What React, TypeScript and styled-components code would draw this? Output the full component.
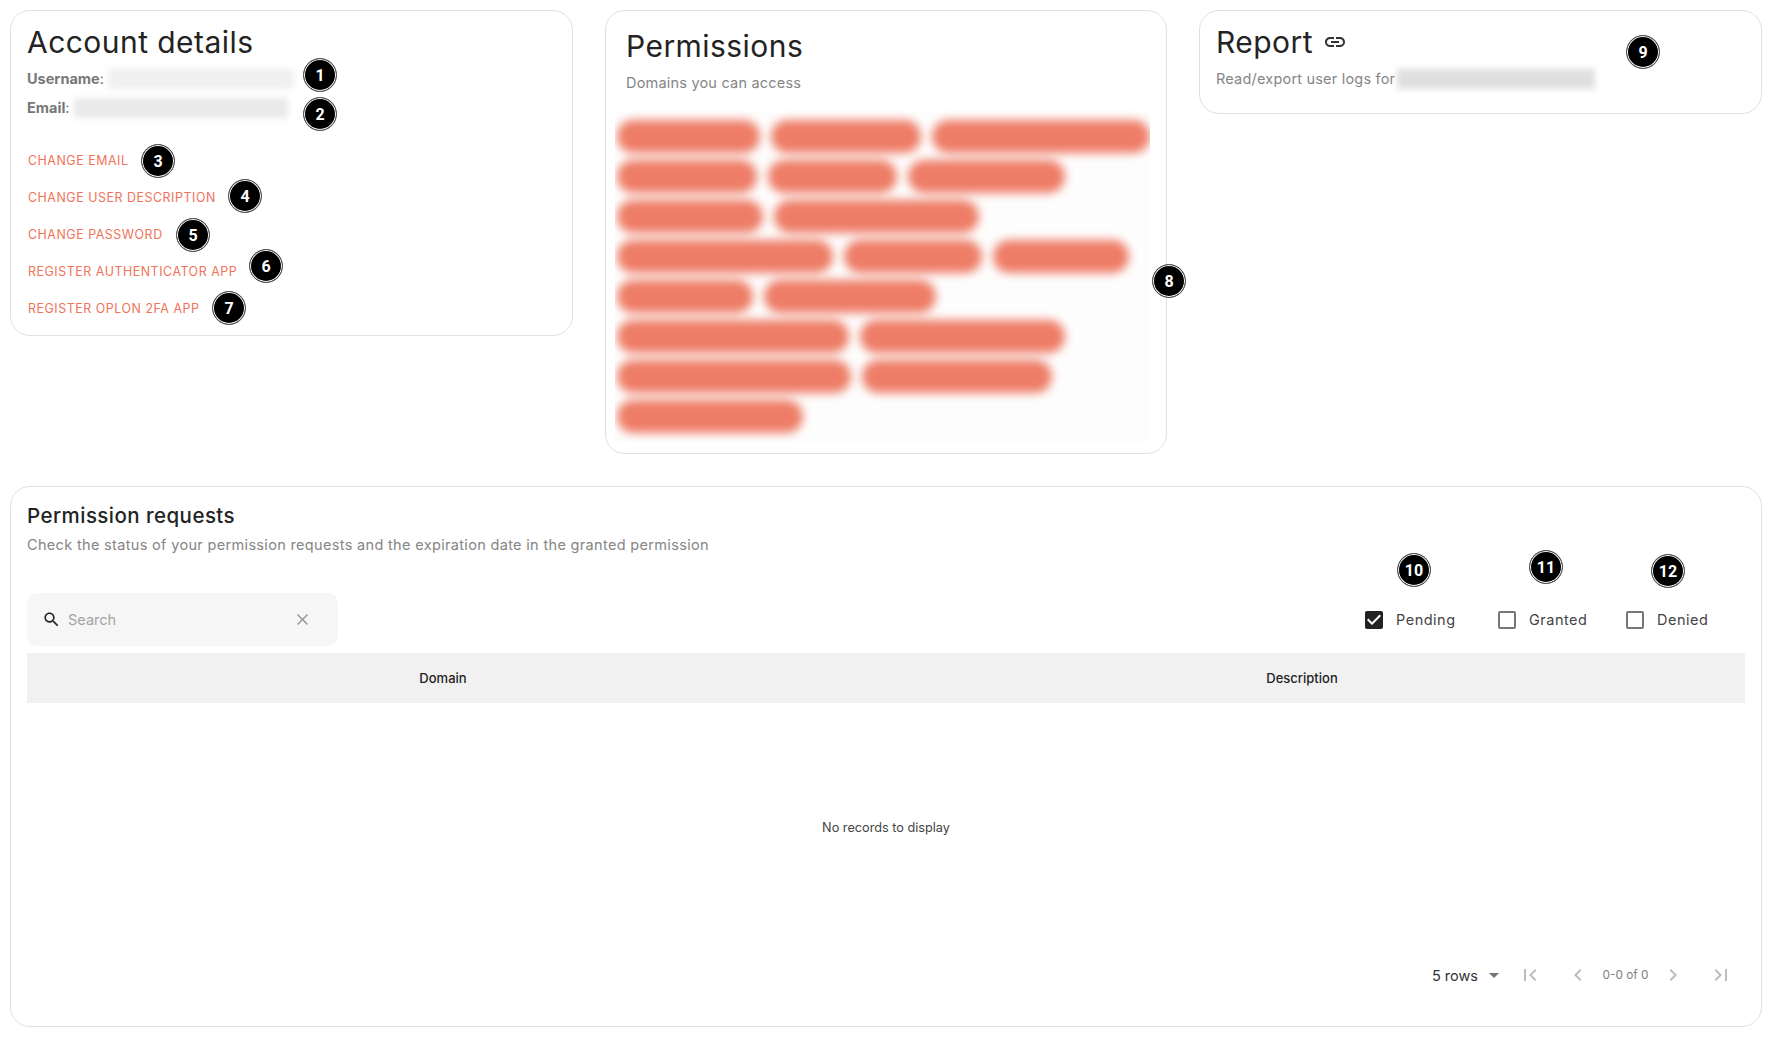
import React from "react";
import styled, { createGlobalStyle } from "styled-components";

const Global = createGlobalStyle`
  html, body { margin: 0; padding: 0; background: #fff; }
  body { font-family: Inter, "Noto Sans", "Liberation Sans", sans-serif; color: #232323; }
`;

const Page = styled.div`
  position: relative;
  box-sizing: border-box;
  width: 1778px;
  height: 1043px;
  padding: 10px 16px 16px 10px;
  overflow: hidden;
`;
const TopGrid = styled.div`
  display: grid;
  grid-template-columns: 563px 562px 563px;
  column-gap: 32px;
  align-items: start;
`;
const Card = styled.section<{ $h: number; $pad?: string }>`
  box-sizing: border-box;
  height: ${(p) => p.$h}px;
  padding: ${(p) => p.$pad || "0 16px"};
  background: #fff;
  border: 1px solid #e0e0e0;
  border-radius: 20px;
`;
const Title = styled.h1<{ $top?: number }>`
  margin: 0;
  padding-top: ${(p) => p.$top ?? 11}px;
  padding-bottom: 1px;
  font-size: 30px;
  line-height: 40px;
  font-weight: 400;
  letter-spacing: 0.45px;
  display: flex;
  align-items: center;
  gap: 10px;
`;
const InfoRow = styled.div`
  display: flex;
  align-items: center;
  height: 29px;
  font-size: 14.5px;
  color: #777;
  position: relative;
  top: 1px;
`;
const InfoLabel = styled.span`
  font-weight: 700;
`;
const Redacted = styled.span<{ $w: number; $tone?: string }>`
  display: inline-block;
  width: ${(p) => p.$w}px;
  height: 20px;
  background: ${(p) => p.$tone || "#e9e9e9"};
  filter: blur(3px);
`;
const Links = styled.div`
  display: flex;
  flex-direction: column;
  margin-top: 21px;
  padding-left: 1px;
`;
const LinkBtn = styled.a`
  display: block;
  height: 37px;
  line-height: 37px;
  font-size: 12.4px;
  letter-spacing: 0.55px;
  color: #f0735a;
  text-transform: uppercase;
`;
const PermHeader = styled.div`
  padding: 0 20px;
`;
const Sub = styled.p`
  margin: 0;
  font-size: 14.5px;
  line-height: 22px;
  color: #858585;
  font-weight: 400;
  letter-spacing: 0.2px;
`;
const PermSub = styled(Sub)`
  margin-top: 5px;
`;
const ChipClip = styled.div`
  margin: 17px 0 0 9px;
  width: 535px;
  height: 331px;
  overflow: hidden;
  background: #fefdfd;
`;
const ChipWrap = styled.div`
  display: flex;
  flex-direction: column;
  gap: 7px;
  padding: 9px 0 0 2px;
  filter: blur(5px);
`;
const ChipRow = styled.div`
  display: flex;
  gap: 11px;
`;
const Chip = styled.span<{ $w: number }>`
  display: block;
  width: ${(p) => p.$w}px;
  height: 33px;
  border-radius: 17px;
  background: #ee7d67;
`;
const ReportRow = styled.div`
  display: flex;
  align-items: center;
  margin-top: 5px;
`;
const ReportRedacted = styled(Redacted)`
  margin-left: 2px;
`;
const Bottom = styled.section`
  box-sizing: border-box;
  height: 541px;
  margin-top: 32px;
  padding: 15px 16px 0;
  border: 1px solid #e0e0e0;
  border-radius: 20px;
  display: flex;
  flex-direction: column;
`;
const H2 = styled.h2`
  margin: 0;
  font-size: 20.5px;
  line-height: 28px;
  font-weight: 500;
  letter-spacing: 0.45px;
`;
const BottomSub = styled(Sub)`
  margin-top: 4px;
  letter-spacing: 0.33px;
`;
const Toolbar = styled.div`
  display: flex;
  align-items: center;
  justify-content: space-between;
  margin-top: 37px;
  height: 53px;
`;
const Search = styled.div`
  box-sizing: border-box;
  width: 311px;
  height: 53px;
  padding: 0 26px 0 15px;
  background: #f6f6f6;
  border-radius: 10px;
  display: flex;
  align-items: center;
  gap: 7px;
  font-size: 14.5px;
  color: #a3a3a3;
`;
const SearchText = styled.span`
  flex: 1;
`;
const Filters = styled.div`
  display: flex;
  align-items: center;
  padding-right: 38px;
`;
const Filter = styled.label<{ $w: number }>`
  display: flex;
  align-items: center;
  gap: 10px;
  width: ${(p) => p.$w}px;
  font-size: 14.5px;
  letter-spacing: 0.5px;
  color: #444;
`;
const HeadRow = styled.div`
  display: grid;
  grid-template-columns: 832px 1fr;
  height: 50px;
  margin-top: 7px;
  background: #f1f1f1;
  font-size: 13px;
  font-weight: 500;
`;
const HeadCell = styled.div`
  display: flex;
  align-items: center;
  justify-content: center;
`;
const Empty = styled.div`
  height: 248px;
  display: flex;
  align-items: center;
  justify-content: center;
  font-size: 12.7px;
  color: #444;
`;
const Footer = styled.div`
  display: flex;
  align-items: center;
  justify-content: flex-end;
  height: 48px;
`;
const Rows = styled.span`
  font-size: 14.5px;
  color: #333;
  margin-right: 4px;
`;
const PageText = styled.span`
  font-size: 11.8px;
  color: #808080;
  width: 47px;
  text-align: center;
  white-space: nowrap;
`;
const Icon = styled.svg<{ $size: number; $color: string; $mx?: number }>`
  width: ${(p) => p.$size}px;
  height: ${(p) => p.$size}px;
  fill: ${(p) => p.$color};
  margin: 0 ${(p) => p.$mx ?? 0}px;
  flex: none;
`;
const Badge = styled.div<{ $x: number; $y: number }>`
  position: absolute;
  left: ${(p) => p.$x - 17}px;
  top: ${(p) => p.$y - 17}px;
  box-sizing: border-box;
  width: 34px;
  height: 34px;
  border-radius: 50%;
  background: #000;
  border: 1px solid #555;
  box-shadow: inset 0 0 0 1px #fff;
  color: #fff;
  font-size: 16px;
  font-weight: 700;
  display: flex;
  align-items: center;
  justify-content: center;
  font-family: Roboto, sans-serif;
`;

const P = {
  link: "M3.9 12c0-1.71 1.39-3.1 3.1-3.1h4V7H7c-2.76 0-5 2.24-5 5s2.24 5 5 5h4v-1.9H7c-1.71 0-3.1-1.39-3.1-3.1zM8 13h8v-2H8v2zm9-6h-4v1.9h4c1.71 0 3.1 1.39 3.1 3.1s-1.39 3.1-3.1 3.1h-4V17h4c2.76 0 5-2.24 5-5s-2.24-5-5-5z",
  search: "M15.5 14h-.79l-.28-.27C15.41 12.59 16 11.11 16 9.5 16 5.91 13.09 3 9.5 3S3 5.91 3 9.5 5.91 16 9.5 16c1.61 0 3.09-.59 4.23-1.57l.27.28v.79l5 4.99L20.49 19l-4.99-5zm-6 0C7.01 14 5 11.99 5 9.5S7.01 5 9.5 5 14 7.01 14 9.5 11.99 14 9.5 14z",
  clear: "M19 6.41L17.59 5 12 10.59 6.41 5 5 6.41 10.59 12 5 17.59 6.41 19 12 13.41 17.59 19 19 17.59 13.41 12z",
  drop: "M7 10l5 5 5-5z",
  first: "M18.41 16.59L13.82 12l4.59-4.59L17 6l-6 6 6 6zM6 6h2v12H6z",
  last: "M5.59 7.41L10.18 12l-4.59 4.59L7 18l6-6-6-6zM16 6h2v12h-2z",
  left: "M15.41 7.41L14 6l-6 6 6 6 1.41-1.41L10.83 12z",
  right: "M10 6L8.59 7.41 13.17 12l-4.58 4.59L10 18l6-6z",
  checked: "M19 3H5c-1.11 0-2 .9-2 2v14c0 1.1.89 2 2 2h14c1.11 0 2-.9 2-2V5c0-1.1-.89-2-2-2zm-9 14l-5-5 1.41-1.41L10 14.17l7.59-7.59L19 8l-9 9z",
  box: "M19 5v14H5V5h14m0-2H5c-1.1 0-2 .9-2 2v14c0 1.1.9 2 2 2h14c1.1 0 2-.9 2-2V5c0-1.1-.9-2-2-2z",
};

const Ico = ({ d, size = 24, color = "#bdbdbd", mx }: { d: string; size?: number; color?: string; mx?: number }) => (
  <Icon viewBox="0 0 24 24" $size={size} $color={color} $mx={mx}>
    <path d={d} />
  </Icon>
);

const chipRows = [
  [143, 150, 218],
  [140, 129, 157],
  [146, 205],
  [216, 138, 136],
  [136, 172],
  [232, 205],
  [234, 190],
  [186],
];

const badges: [number, number, number][] = [
  [1, 320, 75], [2, 320, 114], [3, 158, 161], [4, 245, 196], [5, 193, 235], [6, 266, 266],
  [7, 229, 308], [8, 1169, 281], [9, 1643, 52], [10, 1414, 570], [11, 1546, 567], [12, 1668, 571],
];

const links = ["Change email", "Change user description", "Change password", "Register authenticator app", "Register Oplon 2FA app"];

export default function App() {
  return (
    <Page>
      <Global />
      <TopGrid>
        <Card $h={326}>
          <Title>Account details</Title>
          <InfoRow>
            <InfoLabel>Username</InfoLabel>:&nbsp;<Redacted $w={186} $tone="#f0f0f0" />
          </InfoRow>
          <InfoRow>
            <InfoLabel>Email</InfoLabel>:&nbsp;<Redacted $w={214} />
          </InfoRow>
          <Links>
            {links.map((l) => (
              <LinkBtn key={l}>{l}</LinkBtn>
            ))}
          </Links>
        </Card>
        <Card $h={444} $pad="0">
          <PermHeader>
            <Title $top={15}>Permissions</Title>
            <PermSub>Domains you can access</PermSub>
          </PermHeader>
          <ChipClip>
            <ChipWrap>
              {chipRows.map((row, i) => (
                <ChipRow key={i}>
                  {row.map((w, j) => (
                    <Chip key={j} $w={w} />
                  ))}
                </ChipRow>
              ))}
            </ChipWrap>
          </ChipClip>
        </Card>
        <Card $h={104}>
          <Title>
            Report <Ico d={P.link} size={24} color="#333" />
          </Title>
          <ReportRow>
            <Sub>Read/export user logs for</Sub>
            <ReportRedacted $w={198} $tone="#dfdfdf" />
          </ReportRow>
        </Card>
      </TopGrid>
      <Bottom>
        <H2>Permission requests</H2>
        <BottomSub>Check the status of your permission requests and the expiration date in the granted permission</BottomSub>
        <Toolbar>
          <Search>
            <Ico d={P.search} size={19} color="#222" />
            <SearchText>Search</SearchText>
            <Ico d={P.clear} size={19} color="#999" />
          </Search>
          <Filters>
            <Filter $w={133}>
              <Ico d={P.checked} size={24} color="#222" />
              Pending
            </Filter>
            <Filter $w={128}>
              <Ico d={P.box} size={24} color="#777" />
              Granted
            </Filter>
            <Filter $w={84}>
              <Ico d={P.box} size={24} color="#777" />
              Denied
            </Filter>
          </Filters>
        </Toolbar>
        <HeadRow>
          <HeadCell>Domain</HeadCell>
          <HeadCell>Description</HeadCell>
        </HeadRow>
        <Empty>No records to display</Empty>
        <Footer>
          <Rows>5 rows</Rows>
          <Ico d={P.drop} size={24} color="#757575" />
          <Ico d={P.first} size={24} color="#bdbdbd" mx={12} />
          <Ico d={P.left} size={24} color="#bdbdbd" mx={12} />
          <PageText>0-0 of 0</PageText>
          <Ico d={P.right} size={24} color="#bdbdbd" mx={12} />
          <Ico d={P.last} size={24} color="#bdbdbd" mx={12} />
        </Footer>
      </Bottom>
      {badges.map(([n, x, y]) => (
        <Badge key={n} $x={x} $y={y}>
          {n}
        </Badge>
      ))}
    </Page>
  );
}
